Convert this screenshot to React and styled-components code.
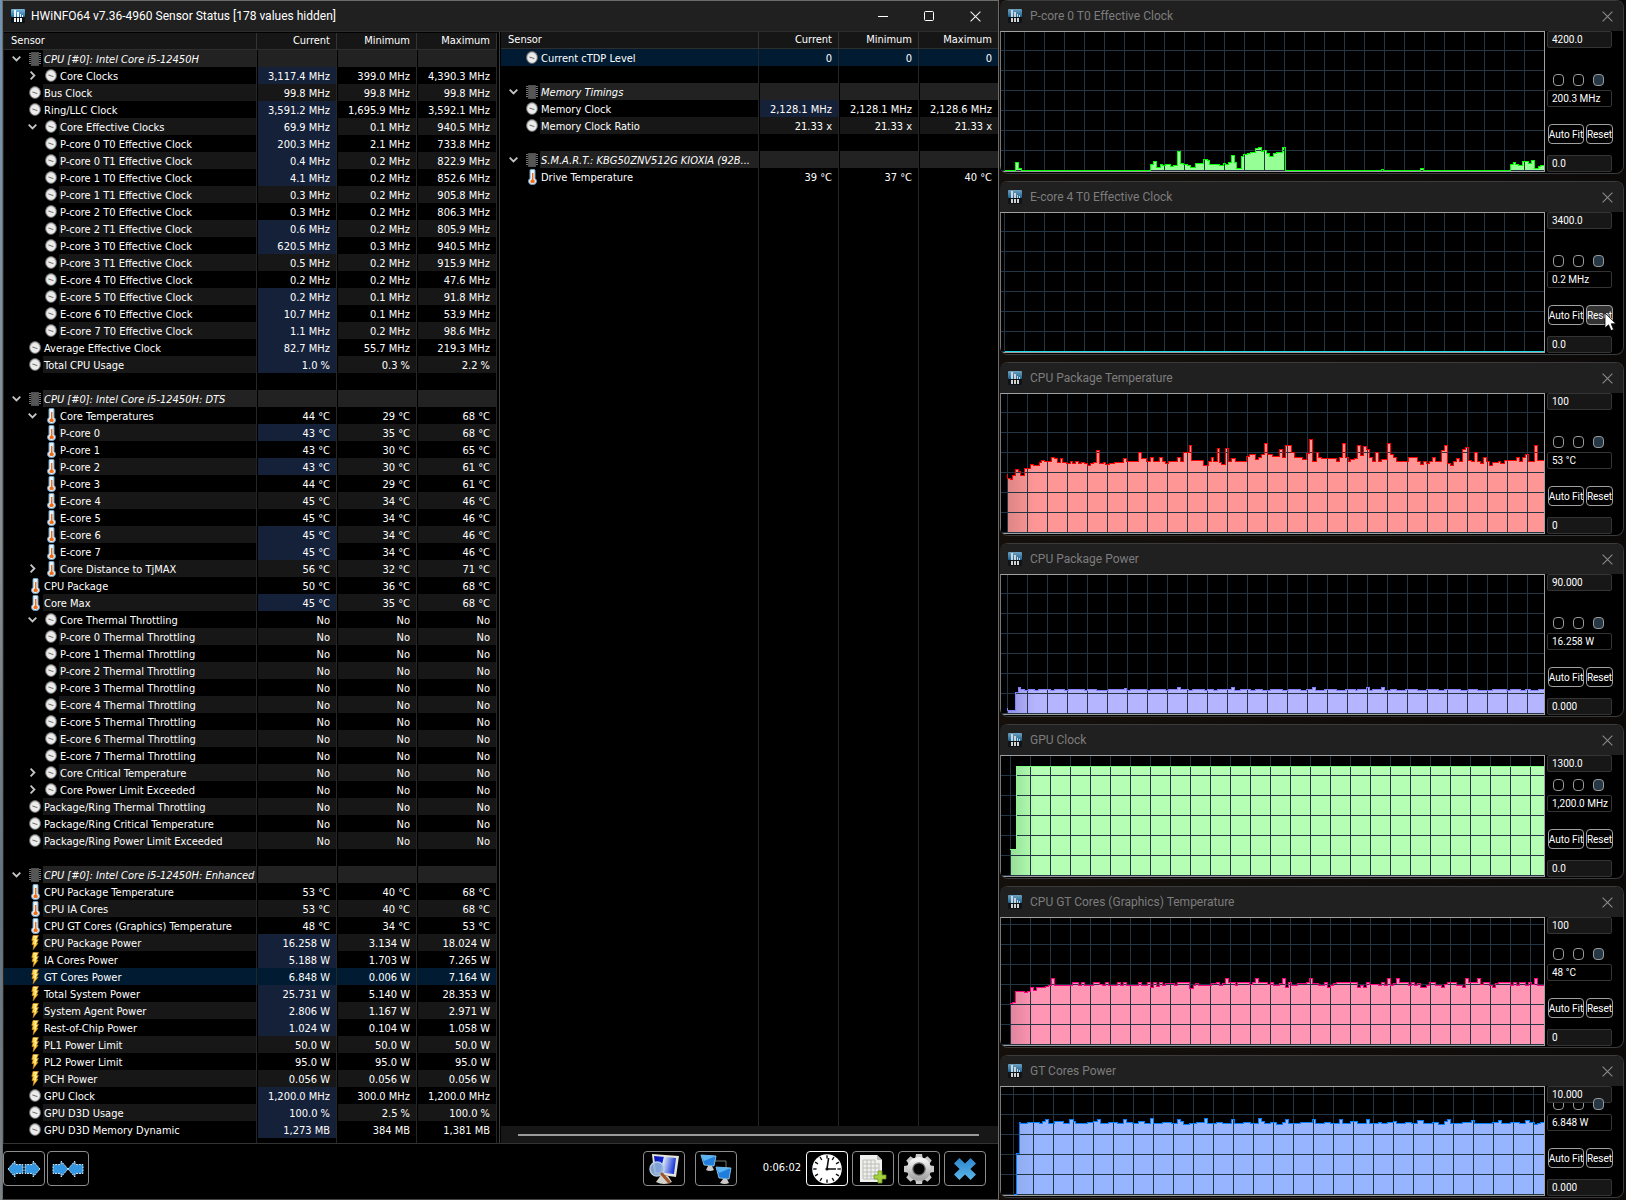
import React from "react";
import styled, { createGlobalStyle, css } from "styled-components";

const LIST_FONT = '"DejaVu Sans Condensed", "DejaVu Sans", sans-serif';
const UI_FONT = 'Roboto, "Open Sans", sans-serif';

const GlobalStyle = createGlobalStyle`
  *, *::before, *::after { box-sizing: border-box; }
  body { margin: 0; background: #0f0c09; color: #fff; font-family: ${LIST_FONT}; font-size: 11px; }
  button, input { font: inherit; color: inherit; margin: 0; }
`;

const Desktop = styled.main`
  display: grid;
  grid-template-columns: minmax(0, 997fr) minmax(0, 624fr);
  column-gap: 1px;
  padding: 0 2px 0 2px;
  min-height: 100vh;
  background:
    linear-gradient(#6f93b4, #8a8f92 45%, #5f7384 75%, #7d8285) left / 2px 100% no-repeat,
    linear-gradient(90deg, #17110c, #0d0b09 30%, #15100b 60%, #0c0a09);
`;

const SensorWindow = styled.section`
  display: flex;
  flex-direction: column;
  background: #000;
  border: 1px solid #6c6c6c;
  border-bottom-color: #444;
`;

const TitleBar = styled.header`
  display: flex;
  align-items: center;
  height: 30px;
  flex: none;
  padding-left: 8px;
  gap: ${(p) => (p.$graph ? 8 : 6)}px;
  background: #202020;
  color: ${(p) => (p.$graph ? "#7d7d7d" : "#fff")};
  font-family: ${UI_FONT};
`;

const Title = styled.h1`
  flex: 1;
  margin: 0;
  font-size: 12px;
  line-height: 16px;
  font-weight: 400;
  white-space: nowrap;
`;

const CaptionButtons = styled.div`
  display: flex;
`;

const CaptionButton = styled.button`
  display: grid;
  place-items: center;
  width: ${(p) => (p.$graph ? 32 : 46)}px;
  height: 28px;
  padding: 0;
  border: 0;
  background: none;
`;

const Panes = styled.div`
  display: grid;
  grid-template-columns: minmax(0, 496fr) minmax(0, 499fr);
  flex: 1;
  border-top: 1px solid #2c2c2c;
  border-bottom: 1px solid #333;
`;

const Pane = styled.div`
  display: flex;
  flex-direction: column;
  min-width: 0;
  border-left: 1px solid ${(p) => (p.$right ? "#3c3c3c" : "#222")};
  padding: ${(p) => (p.$right ? "0 0 0 1px" : "1px 2px 0 0")};
`;

const Table = styled.table`
  width: 100%;
  table-layout: fixed;
  border-collapse: separate;
  border-spacing: 0;
`;

const SensorCol = styled.col`
  width: auto;
`;

const ValueCol = styled.col`
  width: ${(p) => (p.$flush ? 79 : 80)}px;
`;

const HeadCell = styled.th`
  height: 17px;
  padding: 0 7px;
  background: #161616;
  border-bottom: 1px solid #2e2e2e;
  border-right: 1px solid #333;
  line-height: 16px;
  font-weight: 400;
  text-align: ${(p) => (p.$value ? "right" : "left")};
  ${(p) => p.$value && "padding-right: 6px;"}
  ${(p) => p.$flush && "border-right: 0;"}
`;

const shade = { group: "#222222", alt: "#171717", plain: "#000000", selected: "#001b32" };

const NameCell = styled.td`
  height: 17px;
  padding: 0;
  border-right: 1px solid #222629;
  background: ${(p) => (p.$tone === "selected" ? shade.selected : "#000")};
`;

const NameLine = styled.div`
  display: flex;
  height: 17px;
`;

const Gutter = styled.div`
  display: flex;
  flex: none;
  align-items: center;
  justify-content: flex-end;
  width: ${(p) => (p.$depth === 2 ? 55 : 39)}px;
`;

const Toggle = styled.button`
  display: grid;
  place-items: center;
  width: 17px;
  height: 17px;
  padding: 0;
  border: 0;
  background: none;
`;

const Glyph = styled.span`
  display: grid;
  place-items: center;
  width: 18px;
  height: 17px;
  padding-left: 2px;
`;

const Label = styled.span`
  flex: 1;
  min-width: 0;
  overflow: hidden;
  text-overflow: ellipsis;
  white-space: nowrap;
  padding: 2px 0 0 1px;
  line-height: 15px;
  background: ${(p) => shade[p.$tone]};
  ${(p) => p.$tone === "group" && "font-style: italic;"}
`;

const ValueCell = styled.td`
  height: 17px;
  padding: 2px 6px 0 0;
  border-left: 1px solid #000;
  border-right: 1px solid #222629;
  background: ${(p) => (p.$changed && p.$tone !== "selected" ? "#152139" : shade[p.$tone])};
  ${(p) => p.$tone === "selected" && "border-left-color: #001b32;"}
  line-height: 15px;
  text-align: right;
  white-space: nowrap;
  ${(p) => p.$flush && "border-right: 0;"}
`;

const Filler = styled.div`
  display: grid;
  grid-template-columns: minmax(0, 1fr) 80px 80px ${(p) => (p.$flush ? 79 : 80)}px;
  flex: 1;
  min-height: 4px;
`;

const FillerCell = styled.span`
  border-right: 1px solid #222629;
  ${(p) => p.$flush && "border-right: 0;"}
`;

const ScrollTrack = styled.div`
  height: 17px;
  padding: 8px 19px 0 17px;
  background: #171717;
`;

const ScrollThumb = styled.div`
  height: 2px;
  background: #9a9a9a;
`;

const Toolbar = styled.footer`
  display: flex;
  justify-content: space-between;
  height: 55px;
  padding: 7px 12px 0 0;
`;

const ToolGroup = styled.div`
  display: flex;
  gap: ${(p) => p.$gap}px;
`;

const ToolButton = styled.button`
  display: grid;
  place-items: center;
  width: 42px;
  height: 35px;
  padding: 0;
  background: #000;
  border: 1px solid ${(p) => (p.$active ? "#fff" : "#8c8c8c")};
  border-radius: 4px;
`;

const Elapsed = styled.time`
  width: 69px;
  padding-right: 5px;
  line-height: 33px;
  text-align: right;
`;

const GraphColumn = styled.div`
  display: flex;
  flex-direction: column;
  gap: 7px;
  min-width: 0;
`;

const GraphWindow = styled.section`
  display: flex;
  flex-direction: column;
  height: ${(p) => p.$height}px;
  background: #000;
  border: 1px solid #3b3b3b;
  border-left: 0;
  border-radius: 8px;
  overflow: hidden;
`;

const GraphBody = styled.div`
  display: flex;
  flex: 1;
  padding-bottom: 1px;
`;

const Plot = styled.div`
  flex: 1;
  min-width: 0;
  border: 1px solid #a0a0a0;
  border-left-color: #777;
`;

const PlotSvg = styled.svg`
  display: block;
  width: 100%;
  height: 100%;
`;

const Side = styled.form`
  display: grid;
  flex: none;
  width: 78px;
  padding-left: 2px;
  font-family: ${UI_FONT};
`;

const boxText = css`
  width: 65px;
  height: 17px;
  padding: 0 4px;
  border: 1px solid #343434;
  border-radius: 2px;
  font-size: 10px;
  line-height: 15px;
`;

const ScaleInput = styled.input`
  ${boxText}
  position: relative;
  z-index: 1;
  align-self: start;
  grid-area: 1 / 1;
  background: #171717;
`;

const Controls = styled.div`
  display: flex;
  flex-direction: column;
  grid-area: 1 / 1;
  align-self: end;
`;

const Radios = styled.div`
  display: flex;
  gap: 9px;
  padding-left: 6px;
  margin-bottom: 4px;
`;

const Radio = styled.input`
  appearance: none;
  width: 11px;
  height: 12px;
  border: 1px solid #9a9a9a;
  border-radius: 4px;
  &:checked {
    position: relative;
    z-index: 2;
    background: #263746;
  }
`;

const Reading = styled.output`
  ${boxText}
  display: block;
  background: #000;
  white-space: nowrap;
`;

const Actions = styled.div`
  display: flex;
  gap: 2px;
  margin: 17px 0 11px;
  padding-left: 1px;
`;

const ActionButton = styled.button`
  display: flex;
  justify-content: center;
  align-items: center;
  position: relative;
  width: ${(p) => (p.$wide ? 36 : 27)}px;
  height: 20px;
  padding: 0;
  border: 1px solid #a0a0a0;
  border-radius: 4px;
  background: ${(p) => (p.$hover ? "#333" : "#000")};
  font-size: 10px;
  white-space: nowrap;
`;

const FloorInput = styled.input`
  ${boxText}
  background: #171717;
`;

const Pointer = styled.svg`
  position: absolute;
  left: 17px;
  top: 6px;
`;

/* ---------- icons ---------- */

function AppIcon({ dim }) {
  return (
    <svg width="14" height="16" viewBox="0 0 14 16" opacity={dim ? 0.85 : 1} aria-hidden="true">
      <defs>
        <linearGradient id="appSky" x1="0" y1="0" x2="0" y2="1">
          <stop offset="0" stopColor="#7db8dc" />
          <stop offset="1" stopColor="#1d6ea6" />
        </linearGradient>
      </defs>
      <rect x="0" y="1" width="14" height="14" rx="1" fill="#0b1116" />
      <rect x="0" y="1" width="14" height="8" rx="1" fill="url(#appSky)" />
      <path d="M3 2h2v7H3zM6 4h2v5H6zM9 6h1v3H9zM11 7h1v2h-1z" fill="#e9f5ff" />
      <path d="M3 10h2v4H3zM6 10h2v4H6zM9 10h2v4H9z" fill="#f2f2f2" />
    </svg>
  );
}

function ClockIcon() {
  return (
    <svg width="12" height="13" viewBox="0 0 12 13" aria-hidden="true">
      <ellipse cx="6" cy="6.5" rx="5.5" ry="6" fill="#c4c4c4" stroke="#6a6a6a" strokeWidth=".8" />
      <ellipse cx="6" cy="6.8" rx="4.4" ry="4.8" fill="#ececec" />
      <path d="M3.4 6L8.4 7.6" stroke="#6e6a66" strokeWidth="1" />
    </svg>
  );
}

function ThermoIcon() {
  return (
    <svg width="9" height="16" viewBox="0 0 9 16" aria-hidden="true">
      <path d="M2 1.4Q2 .5 3 .5H6Q7 .5 7 1.4V9.4Q8.5 10.6 8.5 12.4Q8.5 15.5 4.5 15.5Q.5 15.5 .5 12.4Q.5 10.6 2 9.4Z" fill="#e6f1f8" stroke="#6f9fc4" />
      <path d="M4 4h1.4v6.4Q6.8 11 6.8 12.4Q6.8 14 4.6 14Q2.4 14 2.4 12.4Q2.4 11 4 10.4Z" fill="#f26a12" />
    </svg>
  );
}

function BoltIcon() {
  return (
    <svg width="8" height="15" viewBox="0 0 8 15" aria-hidden="true">
      <path d="M2 .5H7.4L5.6 4.4H7.4L5.4 8.2H7L2.2 14.6L3 9.6H1L2.2 5.6H.8Z" fill="#ffd84a" stroke="#d98d1d" strokeWidth=".7" />
      <path d="M2.8 1.4H5.6L3.8 5.2H5.6L4 9" stroke="#fff6b8" strokeWidth="1" fill="none" />
    </svg>
  );
}

function ChipIcon() {
  return (
    <svg width="12" height="14" viewBox="0 0 12 14" aria-hidden="true">
      <path d="M0 1.5h12M0 3.5h12M0 5.5h12M0 7.5h12M0 9.5h12M0 11.5h12" stroke="#777" strokeWidth="1" />
      <rect x="2" y="0" width="8" height="14" fill="#4c4c4c" />
      <rect x="3" y="1" width="6" height="12" fill="#565656" />
    </svg>
  );
}

const icons = { clock: ClockIcon, temp: ThermoIcon, bolt: BoltIcon, chip: ChipIcon };

function Chevron({ open }) {
  return (
    <svg width="9" height="9" viewBox="0 0 9 9" fill="none" stroke="#c6c6c6" strokeWidth="1.8" aria-hidden="true">
      <path d={open ? "M.7 2.6L4.5 6.4L8.3 2.6" : "M2.6 .7L6.4 4.5L2.6 8.3"} />
    </svg>
  );
}

function CloseGlyph({ size = 11, color = "#f2f2f2" }) {
  return (
    <svg width={size} height={size} viewBox="0 0 11 11" stroke={color} strokeWidth="1.1" aria-hidden="true">
      <path d="M.6 .6L10.4 10.4M10.4 .6L.6 10.4" />
    </svg>
  );
}

function ArrowsIcon({ inward }) {
  return (
    <svg width="34" height="18" viewBox="0 0 34 18" fill="#3397e4" stroke="#d4ecfb" strokeWidth="1" strokeDasharray="2 1" aria-hidden="true">
      {inward ? (
        <g>
          <path d="M17 9L10 1V4.6H2V13.4H10V17Z" />
          <path d="M17 9L24 1V4.6H32V13.4H24V17Z" />
        </g>
      ) : (
        <g>
          <path d="M1 9L8 1V4.6H16V13.4H8V17Z" />
          <path d="M33 9L26 1V4.6H18V13.4H26V17Z" />
        </g>
      )}
    </svg>
  );
}

function MonitorSearchIcon() {
  return (
    <svg width="32" height="32" viewBox="0 0 32 32" aria-hidden="true">
      <defs>
        <linearGradient id="scr" x1="0" y1="0" x2="1" y2="0.2">
          <stop offset="0" stopColor="#0a14a8" />
          <stop offset=".42" stopColor="#1024d8" />
          <stop offset=".46" stopColor="#dbe8fb" />
          <stop offset="1" stopColor="#1d3ad8" />
        </linearGradient>
      </defs>
      <path d="M4 1L31 3L28 24L6 21Z" fill="#e4e4dc" />
      <path d="M6 3L28 5L26 21L8 19Z" fill="url(#scr)" />
      <path d="M13 22L20 23L24 29Q16 33 8 29Z" fill="#d2d2cc" />
      <circle cx="9" cy="16" r="7" fill="#8fb0dc" fillOpacity=".9" stroke="#b8cfe6" strokeWidth="1.4" />
      <path d="M14 21L21 29" stroke="#a2542a" strokeWidth="3" strokeLinecap="round" />
    </svg>
  );
}

function NetworkIcon() {
  return (
    <svg width="32" height="32" viewBox="0 0 32 32" aria-hidden="true">
      <path d="M15 8H26V15" fill="none" stroke="#777" />
      <path d="M1 2L16 3L14 13L4 12Z" fill="#1f7edb" stroke="#9fd2f4" strokeWidth=".8" />
      <path d="M1 2L16 3L4 8Z" fill="#5cb4f2" />
      <path d="M8 13H12L14 17Q10 19 6 17Z" fill="#c9c9c9" />
      <path d="M16 14L31 15L29 26L19 25Z" fill="#1f7edb" stroke="#9fd2f4" strokeWidth=".8" />
      <path d="M16 14L31 15L19 20Z" fill="#5cb4f2" />
      <path d="M23 26H27L29 30Q25 32 20 30Z" fill="#c9c9c9" />
    </svg>
  );
}

function BigClockIcon() {
  const ticks = Array.from({ length: 12 }, (_, i) => i * 30);
  return (
    <svg width="30" height="30" viewBox="0 0 30 30" aria-hidden="true">
      <circle cx="15" cy="15" r="14.8" fill="#fff" />
      {ticks.map((a) => (
        <path key={a} d="M15 1.2V4.6" stroke="#111" strokeWidth="1.4" transform={`rotate(${a} 15 15)`} />
      ))}
      <path d="M16.6 4L15 15H24" fill="none" stroke="#111" strokeWidth="1.6" />
      <circle cx="15" cy="15" r="1.6" fill="#111" />
    </svg>
  );
}

function ReportIcon() {
  return (
    <svg width="28" height="30" viewBox="0 0 28 30" aria-hidden="true">
      <path d="M1 1H18L23 6V28H1Z" fill="#f0f0ee" />
      <path d="M18 1V6H23Z" fill="#bdbdbd" />
      <path d="M4 6H16M4 10H20M4 14H20M4 18H20M4 22H20M4 25H20M4 6V25M8 6V25M12 6V25M16 6V25M20 9V25" stroke="#bcbcb8" strokeWidth="1" fill="none" />
      <path d="M19 17H23V21H27V25H23V29H19V25H15V21H19Z" fill="#a5d040" stroke="#6b9a1e" strokeWidth=".8" />
    </svg>
  );
}

function GearIcon() {
  const teeth = Array.from({ length: 8 }, (_, i) => i * 45);
  return (
    <svg width="32" height="32" viewBox="0 0 32 32" aria-hidden="true">
      <defs>
        <linearGradient id="steel" x1="0" y1="0" x2="0" y2="1">
          <stop offset="0" stopColor="#f2f2f2" />
          <stop offset="1" stopColor="#a6a6a6" />
        </linearGradient>
      </defs>
      {teeth.map((a) => (
        <path key={a} d="M13 1H19L20 7H12Z" fill="#c9c9c9" transform={`rotate(${a} 16 16)`} />
      ))}
      <circle cx="16" cy="16" r="9" fill="none" stroke="url(#steel)" strokeWidth="6" />
      <circle cx="16" cy="16" r="6.2" fill="#050505" stroke="#777" strokeWidth="1.2" />
    </svg>
  );
}

function BlueCrossIcon() {
  return (
    <svg width="24" height="24" viewBox="0 0 24 24" aria-hidden="true">
      <defs>
        <linearGradient id="crossBlue" x1="0" y1="0" x2="0" y2="1">
          <stop offset="0" stopColor="#2c86cc" />
          <stop offset="1" stopColor="#5cb7ea" />
        </linearGradient>
      </defs>
      <path d="M6.4 1L12 6.6L17.6 1L23 6.4L17.4 12L23 17.6L17.6 23L12 17.4L6.4 23L1 17.6L6.6 12L1 6.4Z" fill="url(#crossBlue)" />
    </svg>
  );
}

/* ---------- sensor data ---------- */

const group = (label) => ({ tone: "group", icon: "chip", depth: 1, label, values: ["", "", ""], toggle: "open" });
const blank = { label: "", values: ["", "", ""], depth: 0 };
const row = (icon, depth, label, values, opts = {}) => ({ icon, depth, label, values: values.split("|"), ...opts });
const hot = { changed: true };
const no = "No|No|No";

const cpuRows = [
  group("CPU [#0]: Intel Core i5-12450H"),
  row("clock", 2, "Core Clocks", "3,117.4 MHz|399.0 MHz|4,390.3 MHz", { changed: true, toggle: "closed" }),
  row("clock", 1, "Bus Clock", "99.8 MHz|99.8 MHz|99.8 MHz"),
  row("clock", 1, "Ring/LLC Clock", "3,591.2 MHz|1,695.9 MHz|3,592.1 MHz", hot),
  row("clock", 2, "Core Effective Clocks", "69.9 MHz|0.1 MHz|940.5 MHz", { changed: true, toggle: "open" }),
  row("clock", 2, "P-core 0 T0 Effective Clock", "200.3 MHz|2.1 MHz|733.8 MHz", hot),
  row("clock", 2, "P-core 0 T1 Effective Clock", "0.4 MHz|0.2 MHz|822.9 MHz", hot),
  row("clock", 2, "P-core 1 T0 Effective Clock", "4.1 MHz|0.2 MHz|852.6 MHz", hot),
  row("clock", 2, "P-core 1 T1 Effective Clock", "0.3 MHz|0.2 MHz|905.8 MHz"),
  row("clock", 2, "P-core 2 T0 Effective Clock", "0.3 MHz|0.2 MHz|806.3 MHz"),
  row("clock", 2, "P-core 2 T1 Effective Clock", "0.6 MHz|0.2 MHz|805.9 MHz", hot),
  row("clock", 2, "P-core 3 T0 Effective Clock", "620.5 MHz|0.3 MHz|940.5 MHz", hot),
  row("clock", 2, "P-core 3 T1 Effective Clock", "0.5 MHz|0.2 MHz|915.9 MHz"),
  row("clock", 2, "E-core 4 T0 Effective Clock", "0.2 MHz|0.2 MHz|47.6 MHz"),
  row("clock", 2, "E-core 5 T0 Effective Clock", "0.2 MHz|0.1 MHz|91.8 MHz", hot),
  row("clock", 2, "E-core 6 T0 Effective Clock", "10.7 MHz|0.1 MHz|53.9 MHz", hot),
  row("clock", 2, "E-core 7 T0 Effective Clock", "1.1 MHz|0.2 MHz|98.6 MHz", hot),
  row("clock", 1, "Average Effective Clock", "82.7 MHz|55.7 MHz|219.3 MHz", hot),
  row("clock", 1, "Total CPU Usage", "1.0 %|0.3 %|2.2 %", hot),
  blank,
  group("CPU [#0]: Intel Core i5-12450H: DTS"),
  row("temp", 2, "Core Temperatures", "44 °C|29 °C|68 °C", { toggle: "open" }),
  row("temp", 2, "P-core 0", "43 °C|35 °C|68 °C", hot),
  row("temp", 2, "P-core 1", "43 °C|30 °C|65 °C"),
  row("temp", 2, "P-core 2", "43 °C|30 °C|61 °C", hot),
  row("temp", 2, "P-core 3", "44 °C|29 °C|61 °C"),
  row("temp", 2, "E-core 4", "45 °C|34 °C|46 °C"),
  row("temp", 2, "E-core 5", "45 °C|34 °C|46 °C"),
  row("temp", 2, "E-core 6", "45 °C|34 °C|46 °C", hot),
  row("temp", 2, "E-core 7", "45 °C|34 °C|46 °C", hot),
  row("temp", 2, "Core Distance to TjMAX", "56 °C|32 °C|71 °C", { toggle: "closed" }),
  row("temp", 1, "CPU Package", "50 °C|36 °C|68 °C"),
  row("temp", 1, "Core Max", "45 °C|35 °C|68 °C", hot),
  row("clock", 2, "Core Thermal Throttling", no, { toggle: "open" }),
  row("clock", 2, "P-core 0 Thermal Throttling", no),
  row("clock", 2, "P-core 1 Thermal Throttling", no),
  row("clock", 2, "P-core 2 Thermal Throttling", no),
  row("clock", 2, "P-core 3 Thermal Throttling", no),
  row("clock", 2, "E-core 4 Thermal Throttling", no),
  row("clock", 2, "E-core 5 Thermal Throttling", no),
  row("clock", 2, "E-core 6 Thermal Throttling", no),
  row("clock", 2, "E-core 7 Thermal Throttling", no),
  row("clock", 2, "Core Critical Temperature", no, { toggle: "closed" }),
  row("clock", 2, "Core Power Limit Exceeded", no, { toggle: "closed" }),
  row("clock", 1, "Package/Ring Thermal Throttling", no),
  row("clock", 1, "Package/Ring Critical Temperature", no),
  row("clock", 1, "Package/Ring Power Limit Exceeded", no),
  blank,
  group("CPU [#0]: Intel Core i5-12450H: Enhanced"),
  row("temp", 1, "CPU Package Temperature", "53 °C|40 °C|68 °C"),
  row("temp", 1, "CPU IA Cores", "53 °C|40 °C|68 °C"),
  row("temp", 1, "CPU GT Cores (Graphics) Temperature", "48 °C|34 °C|53 °C"),
  row("bolt", 1, "CPU Package Power", "16.258 W|3.134 W|18.024 W", hot),
  row("bolt", 1, "IA Cores Power", "5.188 W|1.703 W|7.265 W", hot),
  row("bolt", 1, "GT Cores Power", "6.848 W|0.006 W|7.164 W", { changed: true, tone: "selected" }),
  row("bolt", 1, "Total System Power", "25.731 W|5.140 W|28.353 W", hot),
  row("bolt", 1, "System Agent Power", "2.806 W|1.167 W|2.971 W", hot),
  row("bolt", 1, "Rest-of-Chip Power", "1.024 W|0.104 W|1.058 W", hot),
  row("bolt", 1, "PL1 Power Limit", "50.0 W|50.0 W|50.0 W"),
  row("bolt", 1, "PL2 Power Limit", "95.0 W|95.0 W|95.0 W"),
  row("bolt", 1, "PCH Power", "0.056 W|0.056 W|0.056 W"),
  row("clock", 1, "GPU Clock", "1,200.0 MHz|300.0 MHz|1,200.0 MHz", hot),
  row("clock", 1, "GPU D3D Usage", "100.0 %|2.5 %|100.0 %", hot),
  row("clock", 1, "GPU D3D Memory Dynamic", "1,273 MB|384 MB|1,381 MB", hot),
];

const otherRows = [
  row("clock", 1, "Current cTDP Level", "0|0|0", { tone: "selected" }),
  blank,
  group("Memory Timings"),
  row("clock", 1, "Memory Clock", "2,128.1 MHz|2,128.1 MHz|2,128.6 MHz", hot),
  row("clock", 1, "Memory Clock Ratio", "21.33 x|21.33 x|21.33 x"),
  blank,
  group("S.M.A.R.T.: KBG50ZNV512G KIOXIA (92B..."),
  row("temp", 1, "Drive Temperature", "39 °C|37 °C|40 °C"),
];

function SensorTable({ rows, flush }) {
  return (
    <>
      <Table>
        <colgroup>
          <SensorCol />
          <ValueCol />
          <ValueCol />
          <ValueCol $flush={flush} />
        </colgroup>
        <thead>
          <tr>
            <HeadCell scope="col">Sensor</HeadCell>
            <HeadCell scope="col" $value>Current</HeadCell>
            <HeadCell scope="col" $value>Minimum</HeadCell>
            <HeadCell scope="col" $value $flush={flush}>Maximum</HeadCell>
          </tr>
        </thead>
        <tbody>
          {rows.map((r, i) => {
            const Icon = icons[r.icon];
            const tone = r.tone || (r.label && i % 2 === 0 ? "alt" : "plain");
            return (
              <tr key={i}>
                <NameCell $tone={tone}>
                  <NameLine>
                    <Gutter $depth={r.depth}>
                      {r.toggle && (
                        <Toggle type="button" aria-label={`Toggle ${r.label}`}>
                          <Chevron open={r.toggle === "open"} />
                        </Toggle>
                      )}
                      {Icon && (
                        <Glyph>
                          <Icon />
                        </Glyph>
                      )}
                    </Gutter>
                    <Label $tone={tone}>{r.label}</Label>
                  </NameLine>
                </NameCell>
                {r.values.map((v, c) => (
                  <ValueCell key={c} $tone={tone} $changed={c === 0 && r.changed} $flush={flush && c === 2}>
                    {v}
                  </ValueCell>
                ))}
              </tr>
            );
          })}
        </tbody>
      </Table>
      <Filler $flush={flush}>
        <FillerCell />
        <FillerCell />
        <FillerCell />
        <FillerCell $flush={flush} />
      </Filler>
    </>
  );
}

/* ---------- graph data: flat lists of x, height above the base line ---------- */

const pCore = [4,0,15,8,18,2,21,0,150,6,153,9,156,3,160,6,162,5,165,6,170,4,173,5,177,19,180,7,183,6,187,5,190,3,195,7,203,11,207,10,209,6,219,5,223,7,225,6,228,8,231,15,234,8,236,2,241,14,243,16,247,17,250,18,255,22,258,23,261,19,263,20,266,17,269,14,273,17,276,18,282,23,285,0,381,1,383,0,420,2,423,0,510,6,513,8,515,6,518,5,522,9,528,7,531,10,534,2,538,4,540,5];
const eCore = [4,0];
const pkgTemp = [6,58,7,54,10,53,12,57,15,63,18,61,20,57,24,64,30,68,33,67,39,70,41,72,44,71,51,75,54,74,57,70,60,74,62,70,66,69,70,71,72,69,75,71,78,69,81,70,84,69,87,67,90,69,93,70,96,82,99,69,103,70,105,68,109,69,114,70,123,74,126,71,138,80,141,74,146,71,150,75,153,71,159,75,162,71,165,69,168,71,177,75,180,71,183,80,189,87,191,72,203,67,208,71,211,75,213,71,217,84,219,70,221,68,225,84,228,71,231,74,235,71,246,76,249,78,255,73,258,75,261,78,264,89,267,78,272,76,279,83,282,75,285,87,291,80,294,75,302,73,306,79,309,93,312,71,316,80,318,75,321,74,336,71,339,75,342,89,345,75,348,71,350,73,354,74,357,87,360,77,363,86,366,83,369,75,372,71,375,80,378,71,381,73,387,89,390,78,393,75,396,71,408,75,417,71,420,68,423,71,426,69,429,71,432,75,435,71,441,82,444,87,447,69,450,67,453,71,456,74,459,71,462,83,465,85,468,72,471,71,474,80,477,71,480,69,483,75,486,71,489,67,492,70,498,71,500,69,504,72,516,75,519,71,522,75,525,78,528,71,534,87,537,72];
const pkgPower = [6,5,7,3,15,21,18,26,20,24,24,23,28,24,34,23,38,24,50,23,54,24,64,23,68,24,84,23,87,24,96,23,108,24,124,25,126,23,130,24,146,23,150,24,165,23,168,24,177,26,180,24,188,23,192,24,204,23,207,24,213,23,217,24,231,26,234,23,240,24,250,23,255,24,262,23,270,24,282,23,288,24,300,23,306,24,312,26,315,23,324,24,336,23,345,24,355,23,357,24,366,26,369,23,372,24,381,26,384,23,390,24,396,23,405,24,417,23,426,24,438,23,444,24,460,23,468,24,477,23,492,24,506,23,510,24,520,23,525,24,530,23,538,24];
const gpuClock = [9,26,16,109];
const gtTemp = [9,41,12,42,15,53,24,52,27,53,30,57,33,54,36,57,45,58,48,59,51,66,54,59,72,62,78,59,81,62,84,59,93,62,99,60,102,59,105,62,108,59,117,62,120,59,123,62,126,59,138,62,141,59,147,62,150,57,153,62,156,58,159,62,162,59,165,61,174,59,177,62,189,56,193,59,195,61,198,59,211,61,216,62,219,59,222,61,225,66,228,62,235,59,237,62,249,60,252,62,255,66,258,62,267,60,270,62,273,59,279,61,282,66,285,57,288,62,291,59,297,61,306,62,309,66,312,61,318,59,324,62,327,57,330,59,333,61,336,62,357,57,360,59,363,57,366,62,369,60,378,59,381,62,384,59,387,66,390,59,393,61,396,66,399,62,408,59,411,62,414,59,417,61,420,57,426,59,429,62,435,59,441,57,444,60,447,62,456,59,462,57,465,66,468,62,477,66,480,60,483,62,489,59,492,57,495,61,498,62,510,59,513,62,516,59,519,62,525,59,528,62,531,60,534,66,537,59];
const gtPower = [13,0,16,41,19,72,20,71,27,72,39,71,42,73,45,75,48,71,54,73,63,71,69,75,73,73,75,71,87,72,93,73,97,75,100,71,108,72,117,71,123,75,126,72,132,71,138,73,144,71,150,76,153,71,162,72,171,71,177,75,180,73,183,70,189,71,196,72,204,76,207,71,216,72,222,71,231,75,234,71,243,72,250,71,258,76,261,73,264,71,270,72,276,70,282,72,285,75,288,71,300,72,312,75,315,71,324,72,330,71,339,75,342,71,350,73,357,71,366,75,369,71,378,72,381,71,387,72,393,73,396,71,405,72,411,71,417,74,423,71,432,72,438,70,444,73,447,75,450,71,462,72,471,74,474,71,486,71,492,72,498,74,501,71,510,72,519,71,525,74,529,72,534,70,537,71,540,72];

const graphs = [
  { title: "P-core 0 T0 Effective Clock", height: 174, offset: 3, top: "4200.0", value: "200.3 MHz", floor: "0.0", line: "#00ff00", fill: "#96ff96", data: pCore },
  { title: "E-core 4 T0 Effective Clock", height: 174, offset: 3, top: "3400.0", value: "0.2 MHz", floor: "0.0", line: "#1fdbe8", fill: "#96ffff", data: eCore, hover: true },
  { title: "CPU Package Temperature", height: 174, offset: 6, top: "100", value: "53 °C", floor: "0", line: "#ff0000", fill: "#ff9696", dark: "#d98484", data: pkgTemp },
  { title: "CPU Package Power", height: 174, offset: 6, top: "90.000", value: "16.258 W", floor: "0.000", line: "#8080ff", fill: "#b4b4ff", dark: "#8f8fe0", data: pkgPower },
  { title: "GPU Clock", height: 155, offset: 9, top: "1300.0", value: "1,200.0 MHz", floor: "0.0", line: "#80ff80", fill: "#b4ffb4", dark: "#90d690", data: gpuClock },
  { title: "CPU GT Cores (Graphics) Temperature", height: 162, offset: 9, top: "100", value: "48 °C", floor: "0", line: "#ff0080", fill: "#ff96b4", dark: "#d98099", data: gtTemp },
  { title: "GT Cores Power", height: 143, offset: 12, top: "10.000", value: "6.848 W", floor: "0.000", line: "#0080ff", fill: "#96b4ff", dark: "#8ea6e6", data: gtPower },
];

const PLOT_W = 543;

function Chart({ graph, id }) {
  const h = graph.height - 35;
  const base = h - 1;
  const d = graph.data;
  let steps = "";
  for (let i = 0; i < d.length; i += 2) {
    steps += `V${base - d[i + 1] + 0.5}H${i + 2 < d.length ? d[i + 2] - 0.5 : PLOT_W}`;
  }
  const x0 = d[0] - 0.5;
  const cols = [];
  for (let x = graph.offset; x < PLOT_W; x += 20) cols.push(`M${x + 0.5} 0V${h}`);
  const lines = [];
  for (let y = base; y > 0; y -= 20) lines.push(`M0 ${y + 0.5}H${PLOT_W}`);
  return (
    <PlotSvg viewBox={`0 0 ${PLOT_W} ${h}`} preserveAspectRatio="none" shapeRendering="crispEdges" role="img" aria-label={graph.title}>
      <defs>
        <linearGradient id={id} gradientUnits="userSpaceOnUse" x1="4" x2="34" y1="0" y2="0">
          <stop offset="0" stopColor={graph.dark || graph.fill} />
          <stop offset="1" stopColor={graph.fill} />
        </linearGradient>
      </defs>
      <path d={`M${x0} ${base + 0.5}${steps}V${base + 0.5}Z`} fill={`url(#${id})`} />
      <path d={cols.join("") + lines.join("")} stroke="#243644" fill="none" />
      <path d={`M${x0} ${base - d[1] + 0.5}${steps}`} stroke={graph.line} fill="none" />
    </PlotSvg>
  );
}

function Graph({ graph, index }) {
  const id = `graph${index}`;
  return (
    <GraphWindow $height={graph.height}>
      <TitleBar $graph>
        <AppIcon dim />
        <Title as="h2">{graph.title}</Title>
        <CaptionButton $graph type="button" aria-label={`Close ${graph.title}`}>
          <CloseGlyph color="#8a8a8a" />
        </CaptionButton>
      </TitleBar>
      <GraphBody>
        <Plot>
          <Chart graph={graph} id={id} />
        </Plot>
        <Side>
          <ScaleInput aria-label="Scale maximum" defaultValue={graph.top} />
          <Controls>
            <Radios>
              <Radio type="radio" name={id} aria-label="Line style" />
              <Radio type="radio" name={id} aria-label="Bar style" />
              <Radio type="radio" name={id} aria-label="Filled style" defaultChecked />
            </Radios>
            <Reading>{graph.value}</Reading>
            <Actions>
              <ActionButton $wide type="button">Auto Fit</ActionButton>
              <ActionButton $hover={graph.hover} type="button">
                Reset
                {graph.hover && (
                  <Pointer width="13" height="20" viewBox="0 0 13 20" aria-hidden="true">
                    <path d="M1 1V16L4.6 12.8L7 18.6L9.6 17.5L7.2 11.8H12Z" fill="#fff" stroke="#000" strokeWidth=".8" />
                  </Pointer>
                )}
              </ActionButton>
            </Actions>
            <FloorInput aria-label="Scale minimum" defaultValue={graph.floor} />
          </Controls>
        </Side>
      </GraphBody>
    </GraphWindow>
  );
}

export default function App() {
  return (
    <>
      <GlobalStyle />
      <Desktop>
        <SensorWindow>
          <TitleBar>
            <AppIcon />
            <Title>HWiNFO64 v7.36-4960 Sensor Status [178 values hidden]</Title>
            <CaptionButtons>
              <CaptionButton type="button" aria-label="Minimize">
                <svg width="10" height="11" viewBox="0 0 10 11" aria-hidden="true">
                  <path d="M0 5.5H10" stroke="#fff" />
                </svg>
              </CaptionButton>
              <CaptionButton type="button" aria-label="Maximize">
                <svg width="10" height="10" viewBox="0 0 10 10" aria-hidden="true">
                  <rect x=".5" y=".5" width="9" height="9" rx="1" fill="none" stroke="#fff" />
                </svg>
              </CaptionButton>
              <CaptionButton type="button" aria-label="Close">
                <CloseGlyph />
              </CaptionButton>
            </CaptionButtons>
          </TitleBar>
          <Panes>
            <Pane>
              <SensorTable rows={cpuRows} />
            </Pane>
            <Pane $right>
              <SensorTable rows={otherRows} flush />
              <ScrollTrack>
                <ScrollThumb />
              </ScrollTrack>
            </Pane>
          </Panes>
          <Toolbar>
            <ToolGroup $gap={2}>
              <ToolButton type="button" aria-label="Expand columns"><ArrowsIcon /></ToolButton>
              <ToolButton type="button" aria-label="Shrink columns"><ArrowsIcon inward /></ToolButton>
            </ToolGroup>
            <ToolGroup $gap={0}>
              <ToolGroup $gap={10}>
                <ToolButton type="button" aria-label="Sensor summary"><MonitorSearchIcon /></ToolButton>
                <ToolButton type="button" aria-label="Remote sensors"><NetworkIcon /></ToolButton>
              </ToolGroup>
              <Elapsed>0:06:02</Elapsed>
              <ToolGroup $gap={4}>
                <ToolButton $active type="button" aria-label="Reset clock"><BigClockIcon /></ToolButton>
                <ToolButton type="button" aria-label="Start logging"><ReportIcon /></ToolButton>
                <ToolButton type="button" aria-label="Settings"><GearIcon /></ToolButton>
                <ToolButton type="button" aria-label="Close sensors"><BlueCrossIcon /></ToolButton>
              </ToolGroup>
            </ToolGroup>
          </Toolbar>
        </SensorWindow>
        <GraphColumn>
          {graphs.map((g, i) => (
            <Graph key={g.title} graph={g} index={i} />
          ))}
        </GraphColumn>
      </Desktop>
    </>
  );
}
